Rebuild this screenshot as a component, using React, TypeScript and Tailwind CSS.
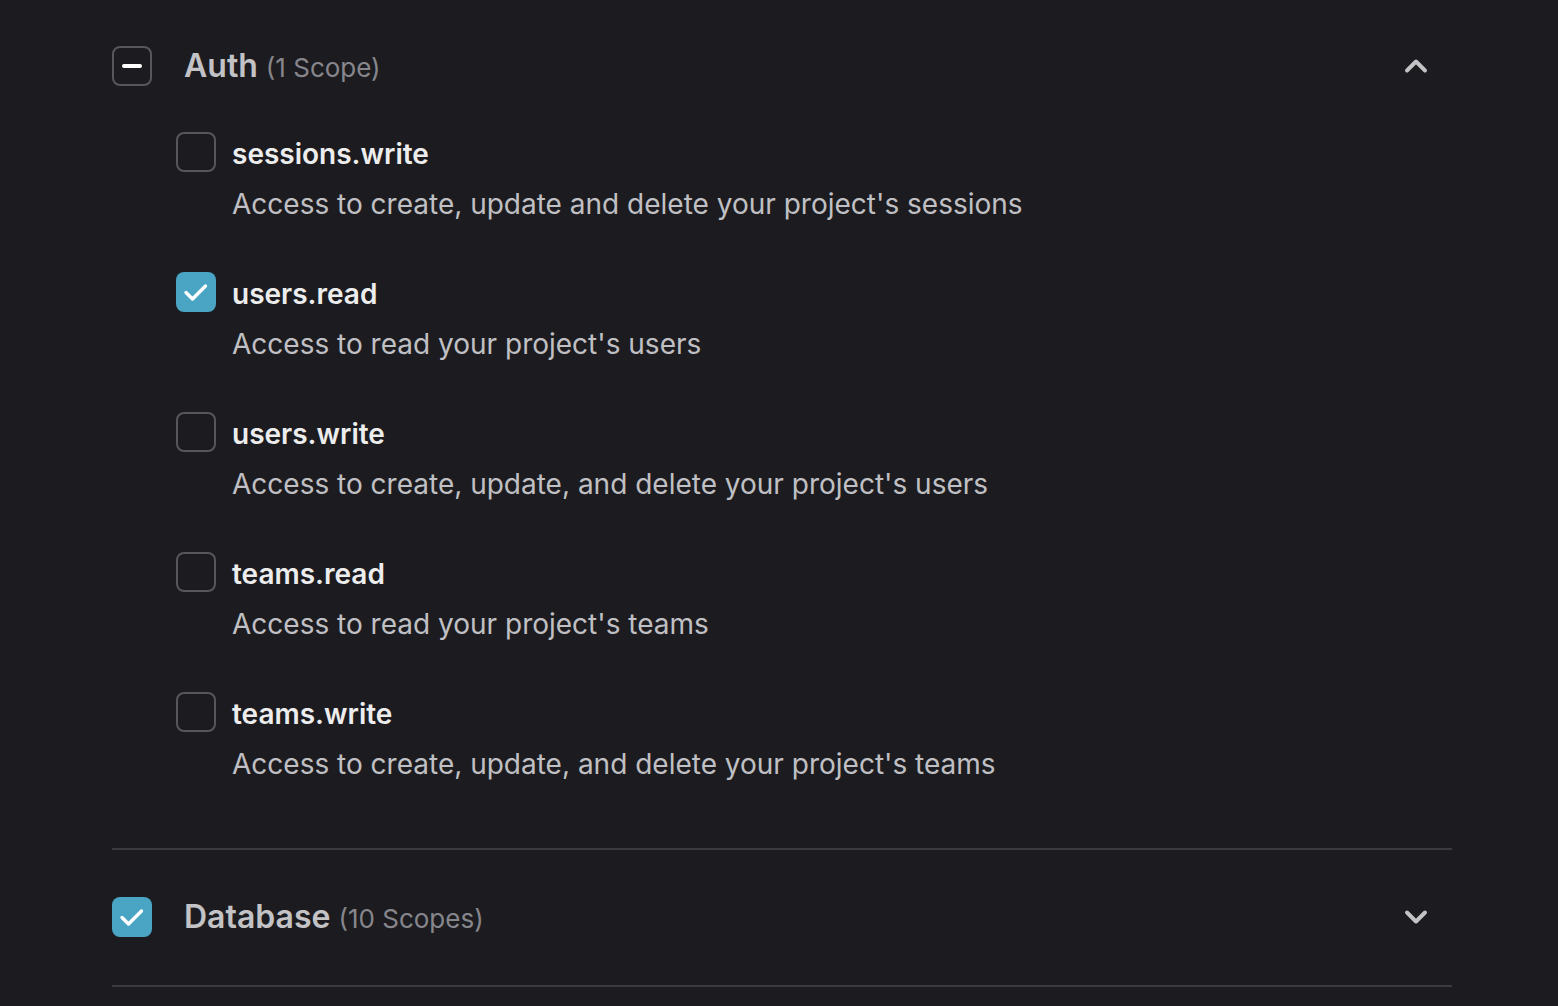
import { ChevronDown, ChevronUp } from 'lucide-react';

type Scope = { name: string; description: string; checked?: boolean };

const authScopes: Scope[] = [
  { name: 'sessions.write', description: "Access to create, update and delete your project's sessions" },
  { name: 'users.read', description: "Access to read your project's users", checked: true },
  { name: 'users.write', description: "Access to create, update, and delete your project's users" },
  { name: 'teams.read', description: "Access to read your project's teams" },
  { name: 'teams.write', description: "Access to create, update, and delete your project's teams" },
];

const Check = () => (
  <svg width="40" height="40" viewBox="0 0 40 40" fill="none" stroke="white" strokeWidth="3.4" strokeLinecap="round" strokeLinejoin="round">
    <path d="M10 20.5l6.5 6.5L29.5 14" />
  </svg>
);

const Box = ({ state }: { state: 'empty' | 'checked' | 'partial' }) => {
  if (state === 'checked') {
    return (
      <div className="w-10 h-10 flex-shrink-0 rounded-lg bg-[#4aa4c3] flex items-center justify-center">
        <Check />
      </div>
    );
  }
  return (
    <div className="w-10 h-10 flex-shrink-0 rounded-lg border-2 border-[#56565c] flex items-center justify-center">
      {state === 'partial' && <div className="w-5 h-1 rounded-full bg-white" />}
    </div>
  );
};

const App = () => {
  return (
    <div className="min-h-[1006px] bg-[#1c1c20] font-['Inter',sans-serif] overflow-hidden">
      <div className="ml-[112px] w-[1340px]">
        {/* Auth */}
        <div className="pt-[46px] pb-[64px] border-b-2 border-[#3a3a3f]">
          <div className="flex items-center h-10">
            <Box state="partial" />
            <div className="ml-[32px] flex items-baseline gap-2">
              <span className="text-[32px] font-semibold text-[#c3c3c6]">Auth</span>
              <span className="text-[26px] text-[#86868c]">(1 Scope)</span>
            </div>
            <ChevronUp className="ml-auto mr-[18px] text-[#c3c3c6]" size={36} strokeWidth={2.6} />
          </div>

          <div className="mt-[46px] ml-16 flex flex-col gap-12">
            {authScopes.map((s) => (
              <div key={s.name} className="flex gap-4">
                <Box state={s.checked ? 'checked' : 'empty'} />
                <div className="flex flex-col gap-3">
                  <span className="h-10 leading-10 pt-[2px] text-[28px] font-semibold text-[#ededee]">{s.name}</span>
                  <span className="h-10 leading-10 text-[28px] text-[#c0c0c4]">{s.description}</span>
                </div>
              </div>
            ))}
          </div>
        </div>

        {/* Database */}
        <div className="pt-[47px] pb-12 border-b-2 border-[#3a3a3f]">
          <div className="flex items-center h-10">
            <Box state="checked" />
            <div className="ml-[32px] flex items-baseline gap-2">
              <span className="text-[32px] font-semibold text-[#c3c3c6]">Database</span>
              <span className="text-[26px] text-[#86868c]">(10 Scopes)</span>
            </div>
            <ChevronDown className="ml-auto mr-[18px] text-[#c3c3c6]" size={36} strokeWidth={2.6} />
          </div>
        </div>
      </div>
    </div>
  );
};

export default App;
